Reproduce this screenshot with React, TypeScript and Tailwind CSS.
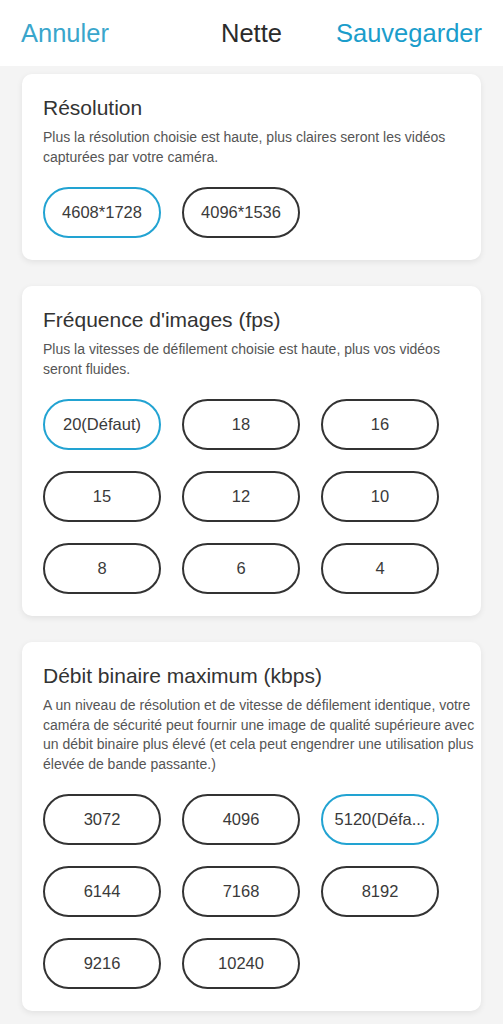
import React, { useState } from 'react';

interface Section {
  id: string;
  title: string;
  description: string;
  options: string[];
  selected: string;
}

const sections: Section[] = [
  {
    id: 'resolution',
    title: 'Résolution',
    description: 'Plus la résolution choisie est haute, plus claires seront les vidéos capturées par votre caméra.',
    options: ['4608*1728', '4096*1536'],
    selected: '4608*1728',
  },
  {
    id: 'fps',
    title: "Fréquence d'images (fps)",
    description: 'Plus la vitesses de défilement choisie est haute, plus vos vidéos seront fluides.',
    options: ['20(Défaut)', '18', '16', '15', '12', '10', '8', '6', '4'],
    selected: '20(Défaut)',
  },
  {
    id: 'bitrate',
    title: 'Débit binaire maximum (kbps)',
    description:
      "A un niveau de résolution et de vitesse de défilement identique, votre caméra de sécurité peut fournir une image de qualité supérieure avec un débit binaire plus élevé (et cela peut engendrer une utilisation plus élevée de bande passante.)",
    options: ['3072', '4096', '5120(Défaut)', '6144', '7168', '8192', '9216', '10240'],
    selected: '5120(Défaut)',
  },
];

function OptionCard({ section }: { section: Section }) {
  const [value, setValue] = useState(section.selected);

  return (
    <div className="bg-white rounded-[10px] shadow-[0_2px_6px_rgba(0,0,0,0.08)] pt-[22px] pb-[22px] pl-[21px] pr-[1px]">
      <h2 className="text-[21px] leading-[24px] text-[#333]">{section.title}</h2>
      <p className="mt-[8px] text-[14px] leading-[19.5px] text-[#555]">{section.description}</p>
      <div className="mt-[20px] grid grid-cols-[repeat(3,118px)] gap-[21px]">
        {section.options.map((opt) => (
          <button
            key={opt}
            type="button"
            onClick={() => setValue(opt)}
            className={
              'h-[51px] rounded-full border-[2.5px] px-2 text-[16.5px] text-[#3a3a3a] truncate bg-white ' +
              (value === opt ? 'border-[#22a3d2]' : 'border-[#333]')
            }
          >
            {opt === '5120(Défaut)' ? '5120(Défa...' : opt}
          </button>
        ))}
      </div>
    </div>
  );
}

export default function App() {
  return (
    <div className="min-h-[1024px] bg-[#f4f4f4] font-['Liberation_Sans',Arial,sans-serif]">
      <header className="h-[66px] bg-white grid grid-cols-[1fr_auto_1fr] items-center pl-[21px] pr-[21px] text-[25.5px]">
        <button type="button" className="text-[#3aa6cc] justify-self-start">Annuler</button>
        <h1 className="text-[#2b2b2b]">Nette</h1>
        <button type="button" className="text-[#1b9dcb] justify-self-end">Sauvegarder</button>
      </header>
      <div className="px-[22px] pt-[8px] flex flex-col gap-[26px]">
        {sections.map((s) => (
          <OptionCard key={s.id} section={s} />
        ))}
      </div>
    </div>
  );
}
